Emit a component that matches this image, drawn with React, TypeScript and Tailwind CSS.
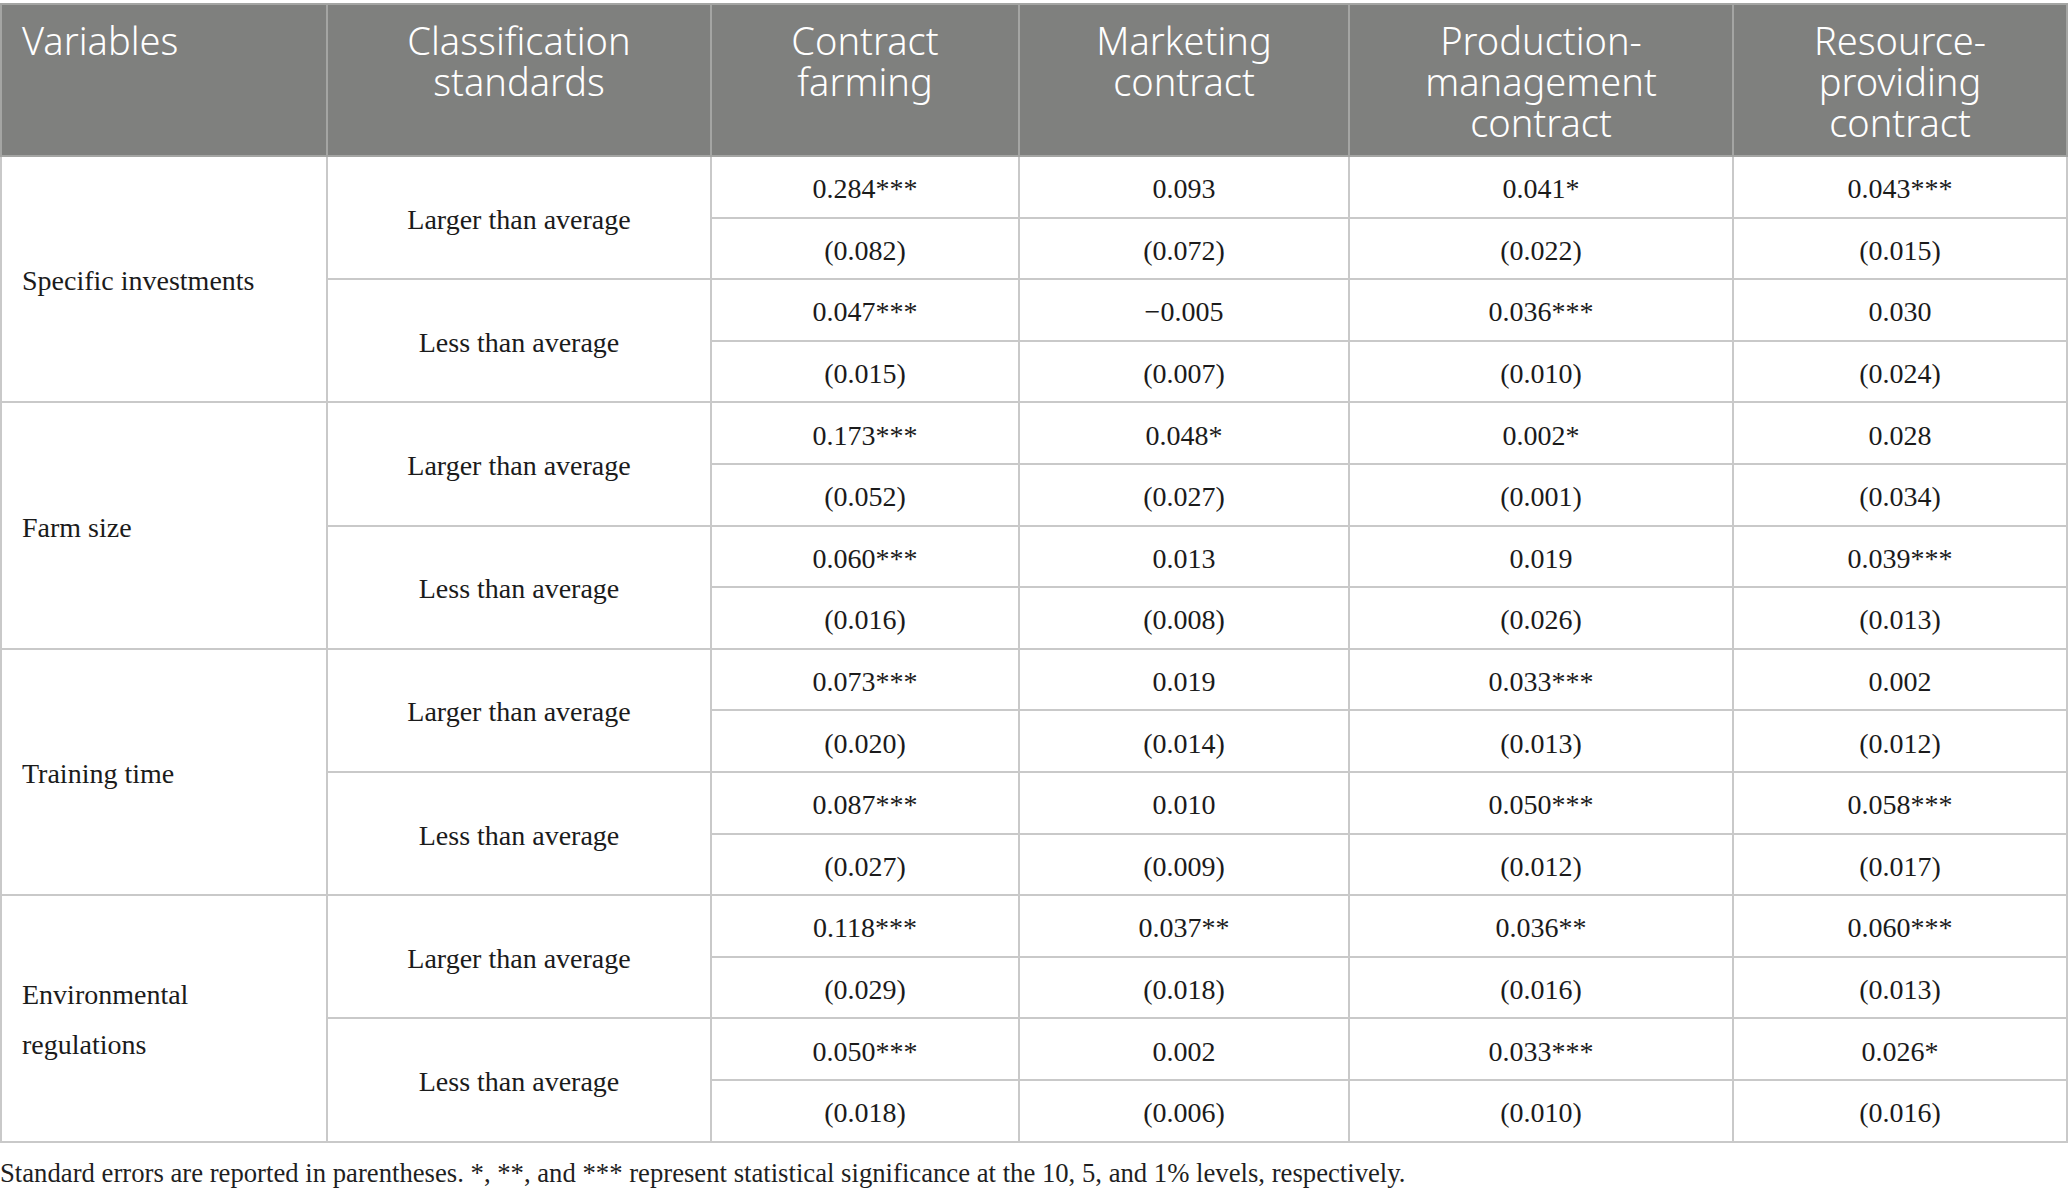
import React from "react";

type Pair = [string, string];
type Group = { name: React.ReactNode; larger: Pair[]; less: Pair[] };

const groups: Group[] = [
  {
    name: "Specific investments",
    larger: [["0.284***", "(0.082)"], ["0.093", "(0.072)"], ["0.041*", "(0.022)"], ["0.043***", "(0.015)"]],
    less: [["0.047***", "(0.015)"], ["\u22120.005", "(0.007)"], ["0.036***", "(0.010)"], ["0.030", "(0.024)"]],
  },
  {
    name: "Farm size",
    larger: [["0.173***", "(0.052)"], ["0.048*", "(0.027)"], ["0.002*", "(0.001)"], ["0.028", "(0.034)"]],
    less: [["0.060***", "(0.016)"], ["0.013", "(0.008)"], ["0.019", "(0.026)"], ["0.039***", "(0.013)"]],
  },
  {
    name: "Training time",
    larger: [["0.073***", "(0.020)"], ["0.019", "(0.014)"], ["0.033***", "(0.013)"], ["0.002", "(0.012)"]],
    less: [["0.087***", "(0.027)"], ["0.010", "(0.009)"], ["0.050***", "(0.012)"], ["0.058***", "(0.017)"]],
  },
  {
    name: "Environmental regulations",
    larger: [["0.118***", "(0.029)"], ["0.037**", "(0.018)"], ["0.036**", "(0.016)"], ["0.060***", "(0.013)"]],
    less: [["0.050***", "(0.018)"], ["0.002", "(0.006)"], ["0.033***", "(0.010)"], ["0.026*", "(0.016)"]],
  },
];

const serif = { fontFamily: "'Liberation Serif', 'Times New Roman', serif" };
const sans = { fontFamily: "'Noto Sans', 'Open Sans', sans-serif" };

const td = "border-2 border-[#c9c9c9] h-[61.6px] pt-[5px] pb-0 px-0 text-center align-middle";
const th = "border-2 border-[#a4a5a3] px-4 pt-[15px] pb-[12px] align-top font-light text-white text-[38px] leading-[41px]";

export default function App() {
  return (
    <div className="w-[2068px] bg-white pt-[3px] text-[#1b1b1b]">
      <table className="w-full table-fixed border-collapse" style={serif}>
        <colgroup>
          <col className="w-[326px]" />
          <col className="w-[384px]" />
          <col className="w-[308px]" />
          <col className="w-[330px]" />
          <col className="w-[384px]" />
          <col />
        </colgroup>
        <thead>
          <tr className="bg-[#7f807e]" style={sans}>
            <th className={th + " text-left pl-[20px]"}>Variables</th>
            <th className={th + " text-center"}>
              Classification
              <br />
              standards
            </th>
            <th className={th + " text-center"}>
              Contract
              <br />
              farming
            </th>
            <th className={th + " text-center"}>
              Marketing
              <br />
              contract
            </th>
            <th className={th + " text-center"}>
              Production-
              <br />
              management
              <br />
              contract
            </th>
            <th className={th + " text-center"}>
              Resource-
              <br />
              providing
              <br />
              contract
            </th>
          </tr>
        </thead>
        <tbody className="text-[28px] leading-[50px]">
          {groups.map((g, gi) => (
            <React.Fragment key={gi}>
              {(["larger", "less"] as const).map((k, ki) => (
                <React.Fragment key={k}>
                  <tr>
                    {ki === 0 && (
                      <td rowSpan={4} className="border-2 border-[#c9c9c9] pl-[20px] pr-4 pt-[4px] text-left align-middle">
                        {g.name}
                      </td>
                    )}
                    <td rowSpan={2} className="border-2 border-[#c9c9c9] pt-[4px] text-center align-middle">
                      {k === "larger" ? "Larger than average" : "Less than average"}
                    </td>
                    {g[k].map((p, i) => (
                      <td key={i} className={td}>
                        {p[0]}
                      </td>
                    ))}
                  </tr>
                  <tr>
                    {g[k].map((p, i) => (
                      <td key={i} className={td}>
                        {p[1]}
                      </td>
                    ))}
                  </tr>
                </React.Fragment>
              ))}
            </React.Fragment>
          ))}
        </tbody>
      </table>
      <p className="mt-[12px] text-[26.7px] leading-[36px] text-[#1f1f1f]" style={serif}>
        Standard errors are reported in parentheses. *, **, and *** represent statistical significance at the 10, 5, and
        1% levels, respectively.
      </p>
    </div>
  );
}
